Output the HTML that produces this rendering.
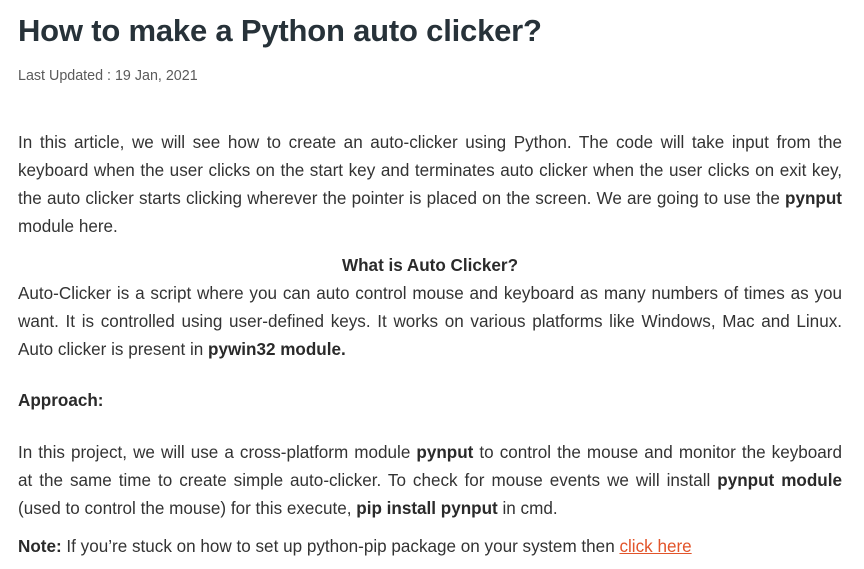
<!DOCTYPE html>
<html><head><meta charset="utf-8"><style>
body{margin:0;background:#fff;font-family:"Liberation Sans",sans-serif;color:#273239;}
h1{position:absolute;left:18px;top:13px;margin:0;font-size:31px;font-weight:600;color:#273239;letter-spacing:-0.2px;}
.upd{position:absolute;left:18px;top:68px;font-size:14.3px;color:#5a5a5a;}
.l{position:absolute;left:18px;width:824px;font-size:17.1px;line-height:20px;color:#333;white-space:nowrap;}
.j{text-align:justify;text-align-last:justify;white-space:normal;}
b{font-weight:bold;color:#2a2a2a;}
a{color:#e2542a;text-decoration:underline;}
.c{text-align:center;}
</style></head><body>
<h1>How to make a Python auto clicker?</h1>
<div class="upd">Last Updated : 19 Jan, 2021</div>
<div class="l j" style="top:133px">In this article, we will see how to create an auto-clicker using Python. The code will take input from the</div>
<div class="l j" style="top:161px">keyboard when the user clicks on the start key and terminates auto clicker when the user clicks on exit key,</div>
<div class="l j" style="top:189px">the auto clicker starts clicking wherever the pointer is placed on the screen. We are going to use the <b>pynput</b></div>
<div class="l" style="top:217px">module here.</div>
<div class="l c" style="top:256px"><b>What is Auto Clicker?</b></div>
<div class="l j" style="top:284px">Auto-Clicker is a script where you can auto control mouse and keyboard as many numbers of times as you</div>
<div class="l j" style="top:312px">want. It is controlled using user-defined keys. It works on various platforms like Windows, Mac and Linux.</div>
<div class="l" style="top:340px">Auto clicker is present in <b>pywin32 module.</b></div>
<div class="l" style="top:391px"><b>Approach:</b></div>
<div class="l j" style="top:443px">In this project, we will use a cross-platform module <b>pynput</b> to control the mouse and monitor the keyboard</div>
<div class="l j" style="top:471px">at the same time to create simple auto-clicker. To check for mouse events we will install <b>pynput module</b></div>
<div class="l" style="top:499px">(used to control the mouse) for this execute, <b>pip install pynput</b> in cmd.</div>
<div class="l" style="top:537px"><b>Note:</b> If you’re stuck on how to set up python-pip package on your system then <a>click here</a></div>
</body></html>
